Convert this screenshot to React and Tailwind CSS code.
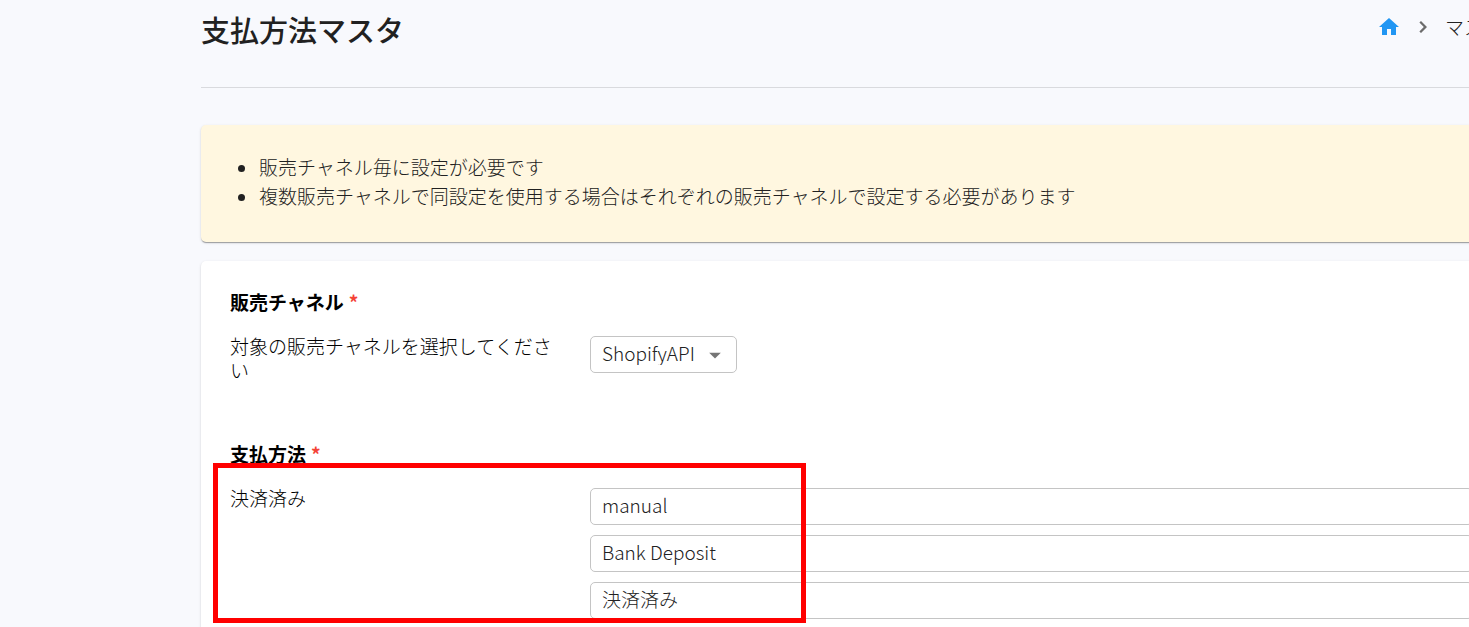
import { useState } from "react";

const NOTES = [
  "販売チャネル毎に設定が必要です",
  "複数販売チャネルで同設定を使用する場合はそれぞれの販売チャネルで設定する必要があります",
];

const CHANNELS = ["ShopifyAPI"];

// ================= ICONS =================

const HomeIcon = () => (
  <svg viewBox="0 0 24 24" className="w-6 h-6 fill-[#2196f3]" aria-hidden="true">
    <path d="M10 20v-6h4v6h5v-8h3L12 3 2 12h3v8z" />
  </svg>
);

const ChevronIcon = () => (
  <svg viewBox="0 0 24 24" className="w-6 h-6 fill-[#6c6c6c]" aria-hidden="true">
    <path d="M10 6 8.4 7.6 12.8 12l-4.4 4.4L10 18l6-6z" />
  </svg>
);

const ArrowIcon = () => (
  <svg
    viewBox="0 0 24 24"
    className="absolute right-2 top-1/2 -translate-y-1/2 w-7 h-7 fill-[#757575] pointer-events-none"
    aria-hidden="true"
  >
    <path d="m7 10 5 5 5-5z" />
  </svg>
);

const controlStyle = "h-[37px] px-[11px] pb-1 rounded-[5px] border border-[#c4c4c4] bg-white text-[#212121] outline-none focus:border-[#2196f3]";
const paperStyle = "rounded-[5px] shadow-[0_2px_1px_-1px_rgba(0,0,0,0.2),0_1px_1px_rgba(0,0,0,0.14),0_1px_3px_rgba(0,0,0,0.12)]";

// ================= LAYOUT PARTS =================

function SectionTitle({ children }) {
  return (
    <h2 className="font-bold">
      {children}
      <span className="ml-[5px] text-[#f44336]">*</span>
    </h2>
  );
}

function FieldRow({ label, htmlFor, children }) {
  return (
    <div className="mt-5 flex items-start">
      <label htmlFor={htmlFor} className="w-[330px] mr-[30px] shrink-0">
        {label}
      </label>
      <div className="mt-0.5 flex-1">{children}</div>
    </div>
  );
}

export default function App() {
  const [channel, setChannel] = useState(CHANNELS[0]);
  const [methods, setMethods] = useState(["manual", "Bank Deposit", "決済済み"]);

  const updateMethod = (index, value) => {
    setMethods(methods.map((m, i) => (i === index ? value : m)));
  };

  return (
    <div
      lang="ja"
      className="min-h-screen overflow-x-hidden bg-[#f8f9fd] pl-[201px] text-[19px] leading-6 font-light text-black font-['Noto_Sans_CJK_JP',sans-serif]"
    >
      <main className="-mr-[33px]">
        <header className="flex items-start justify-between h-[88px] border-b border-[#d9dade] text-[#212121]">
          <h1 className="mt-[11px] text-[29px] leading-9 font-medium">支払方法マスタ</h1>
          <nav aria-label="breadcrumb" className="mt-[15px] flex items-center gap-[10px]">
            <a href="#home" aria-label="ホーム">
              <HomeIcon />
            </a>
            <ChevronIcon />
            <a href="#master">マスタ</a>
          </nav>
        </header>

        <section className={`mt-[37px] bg-[#fff7e0] text-[#212121] pt-[27px] pb-8 ${paperStyle}`}>
          <ul className="list-disc pl-[58px] leading-[29px]">
            {NOTES.map((note) => (
              <li key={note}>{note}</li>
            ))}
          </ul>
        </section>

        <form className={`mt-[19px] bg-white px-[29px] pt-[29px] pb-7 flex flex-col gap-15 ${paperStyle}`}>
          <section>
            <SectionTitle>販売チャネル</SectionTitle>
            <FieldRow label="対象の販売チャネルを選択してください" htmlFor="channel">
              <div className="relative inline-block align-top">
                <select
                  id="channel"
                  value={channel}
                  onChange={(e) => setChannel(e.target.value)}
                  className={`${controlStyle} appearance-none cursor-pointer pr-[41px]`}
                >
                  {CHANNELS.map((c) => (
                    <option key={c}>{c}</option>
                  ))}
                </select>
                <ArrowIcon />
              </div>
            </FieldRow>
          </section>

          <section className="relative">
            <SectionTitle>支払方法</SectionTitle>
            <FieldRow label="決済済み" htmlFor="method-0">
              <div className="flex flex-col gap-[10px]">
                {methods.map((method, i) => (
                  <input
                    key={i}
                    id={`method-${i}`}
                    type="text"
                    aria-label={`決済済み ${i + 1}`}
                    value={method}
                    onChange={(e) => updateMethod(i, e.target.value)}
                    className={`w-full ${controlStyle}`}
                  />
                ))}
              </div>
            </FieldRow>
            {/* highlight frame */}
            <div className="absolute -left-[17px] top-[21px] w-[593px] h-40 border-5 border-[#ff0000] pointer-events-none" />
          </section>
        </form>
      </main>
    </div>
  );
}
